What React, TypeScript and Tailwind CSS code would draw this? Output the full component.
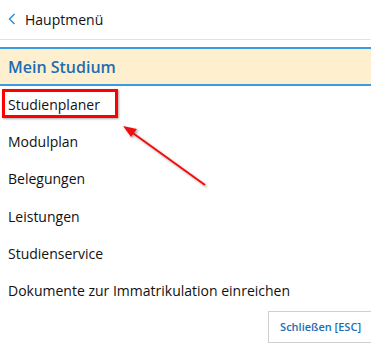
import React from "react";

const items = [
  "Studienplaner",
  "Modulplan",
  "Belegungen",
  "Leistungen",
  "Studienservice",
  "Dokumente zur Immatrikulation einreichen",
];

export default function App() {
  return (
    <div
      className="relative w-[371px] h-[351px] overflow-hidden bg-white text-[#111]"
      style={{ fontFamily: '"Open Sans", "Noto Sans", sans-serif' }}
    >
      <div className="flex h-[40px] items-center gap-[9px] border-b border-[#dbe3ea] pl-[8px] text-[14px]">
        <svg width="8" height="12" viewBox="0 0 8 12" className="mt-[-1px]">
          <path d="M6.5 1 L1.5 6 L6.5 11" fill="none" stroke="#2a8ad6" strokeWidth="1.4" />
        </svg>
        <span>Hauptmenü</span>
      </div>
      <div className="mt-[7px] flex h-[39px] items-center border-y-2 border-[#3a9be0] bg-[#fef0cf] pl-[8px] text-[16px] font-semibold text-[#1c6db3]">
        Mein Studium
      </div>
      <ul className="flex flex-col text-[14px]">
        {items.map((t) => (
          <li key={t} className="flex h-[37.2px] items-center pl-[8px]">
            {t}
          </li>
        ))}
      </ul>
      <div className="mt-[2px] flex justify-end">
        <button className="-mr-[3px] h-[32px] border border-[#cfcfcf] bg-white pl-[11px] pr-[12px] text-[11px] font-semibold text-[#1c6db3]">
          Schließen [ESC]
        </button>
      </div>

      {/* annotation: red box */}
      <div className="absolute left-[2px] top-[89px] h-[29px] w-[116px] border-[3px] border-[#ff0000] shadow-[1px_1px_2px_rgba(0,0,0,0.35)]" />
      {/* annotation: arrow */}
      <svg className="absolute left-0 top-0" width="371" height="351" viewBox="0 0 371 351">
        <defs>
          <filter id="sh" x="-20%" y="-20%" width="140%" height="140%">
            <feDropShadow dx="1.5" dy="1.5" stdDeviation="1" floodColor="#000" floodOpacity="0.35" />
          </filter>
        </defs>
        <g filter="url(#sh)">
          <line x1="205" y1="185" x2="130" y2="131" stroke="#ee1111" strokeWidth="2" />
          <polygon points="123,126 137,129 131,137" fill="#ee1111" />
        </g>
      </svg>
    </div>
  );
}
